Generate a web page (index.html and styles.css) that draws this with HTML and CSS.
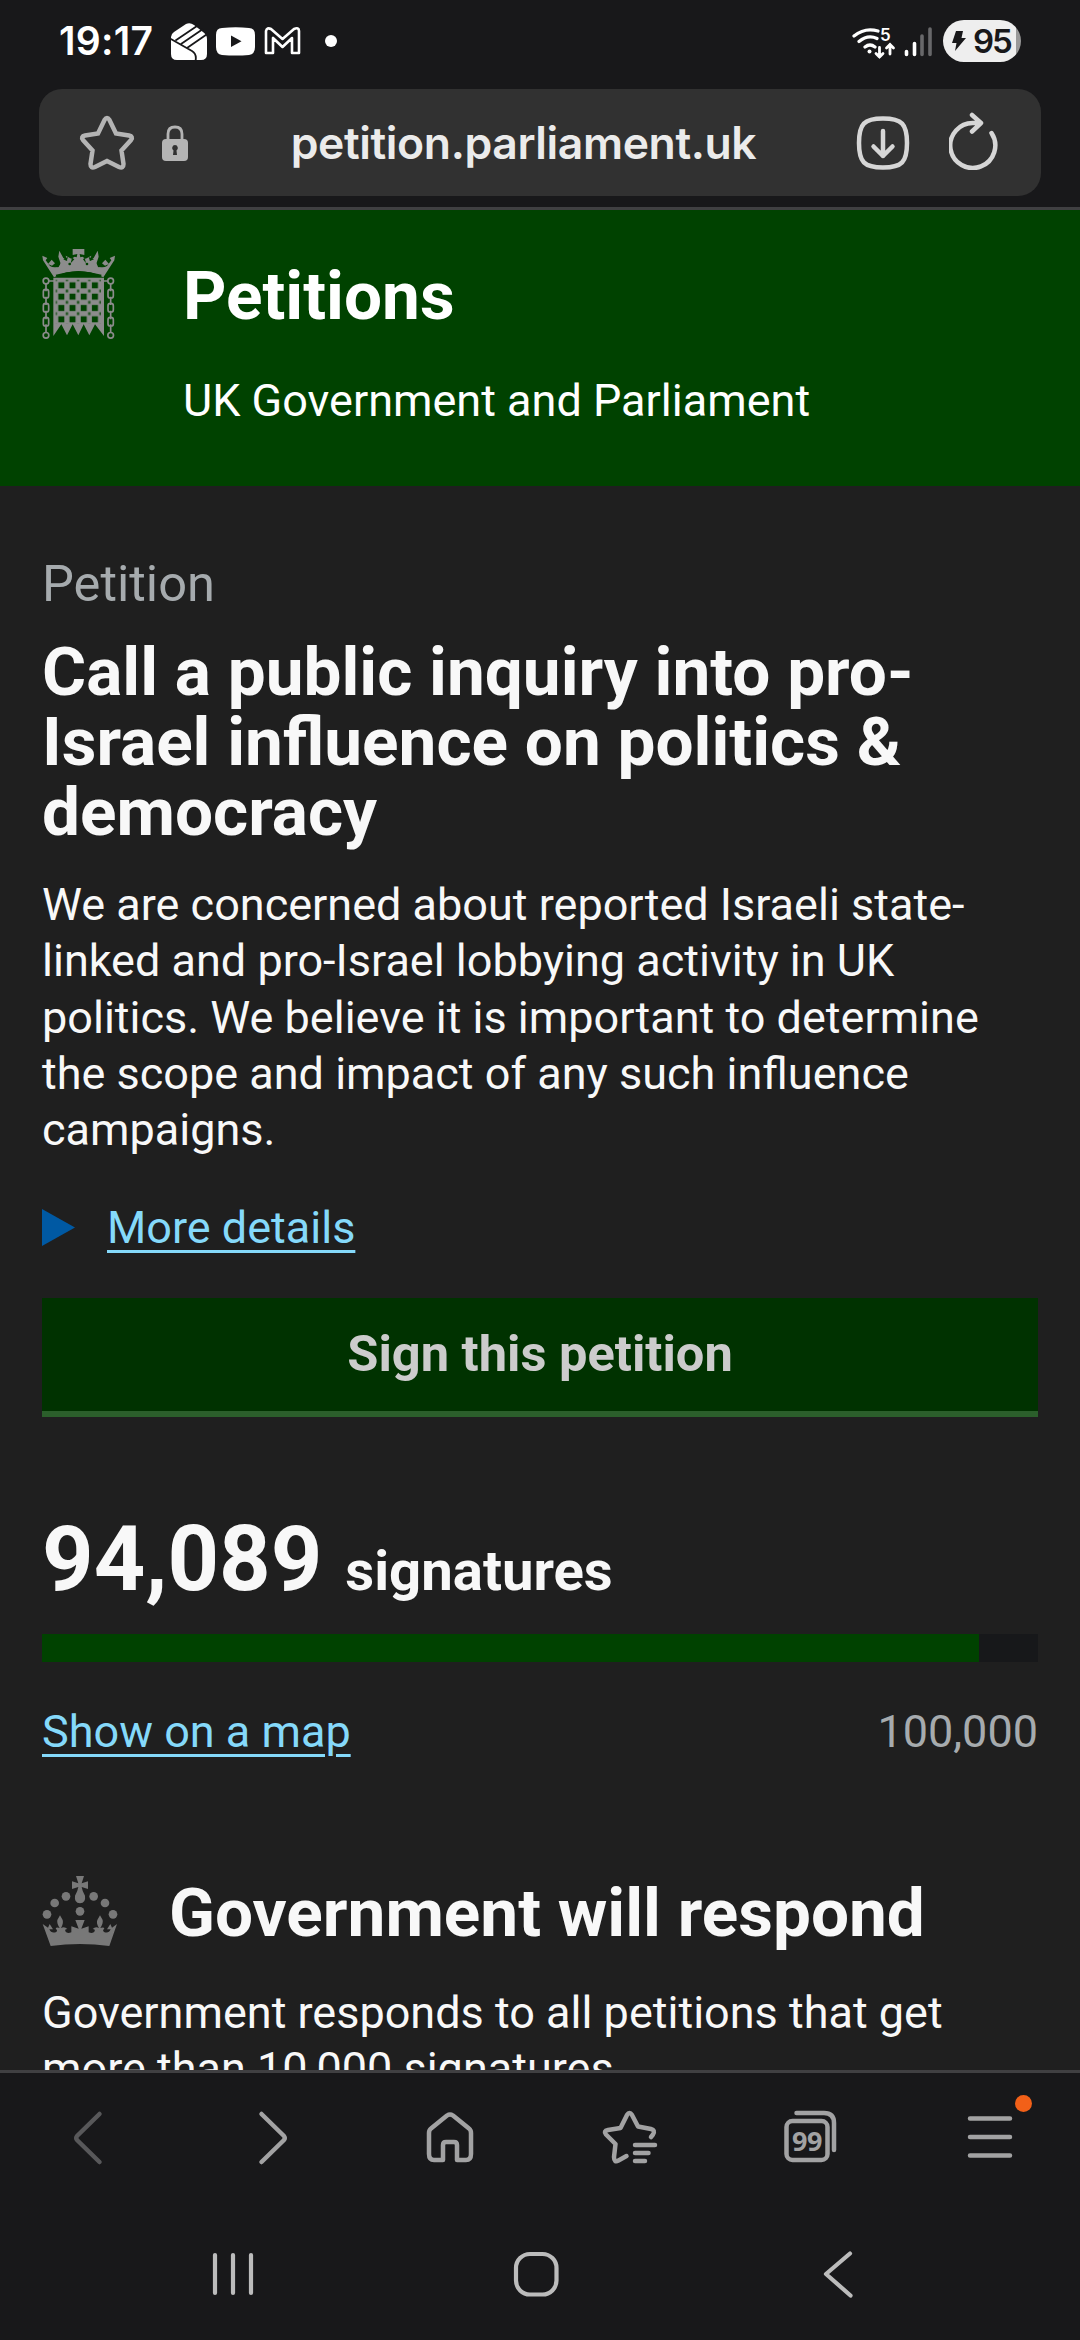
FILE: index.html
```html
<!DOCTYPE html>
<html lang="en">
<head>
    <meta charset="UTF-8">
    <meta name="viewport" content="width=device-width, initial-scale=1.0">
    <title>Petitions - UK Government and Parliament</title>
    <link rel="stylesheet" href="styles.css">
</head>
<body>
    <div class="status-bar">
        <span class="clock">19:17</span>
        <svg class="status-apps" width="170" height="42" viewBox="170 20 170 42">
            <!-- fist -->
            <path fill="#fff" d="M171 41V37Q171 34 174 32L186 24Q190 22 194 25L203 32Q207 35 207 39V54Q207 60 201 60H177Q171 60 171 54Z"/>
            <path fill="none" stroke="#18181a" stroke-width="1.8" d="M170 38.500 192 51Q197 54 195.500 61M175.500 40.500 197 26M181 44 203 29M187 48 208 33.500"/>
            <!-- youtube -->
            <path fill="#fff" d="M222 28Q236 26.500 249 28Q255 28 255 35V47Q255 54 249 55Q236 56 222 55Q216 54 216 47V35Q216 28 222 28Z"/>
            <path fill="#18181a" d="M231 35.500V47L241.500 41.200Z"/>
            <!-- gmail -->
            <path fill="none" stroke="#fff" stroke-width="2.600" stroke-linejoin="round" d="M266 53V31Q267 27 271 29L282.500 39 294 29Q299 27 299 31V53H292V38L282.500 47 273 38V53Z"/>
            <circle fill="#fff" cx="331" cy="41" r="6"/>
        </svg>
        <svg class="status-signal" width="82" height="42" viewBox="852 20 82 42">
            <g fill="none" stroke="#fff" stroke-width="3.200" stroke-linecap="round">
                <path d="M854 36Q865 27 878 31M859 41.500Q868 34 877 38.500M865 47Q870 43 875 47"/>
                <path stroke-width="2.800" d="M879.500 47.500V57M876 53.500 879.500 57 883 53.500M890 54V44.500M886.500 48 890 44.500 893.500 48"/>
            </g>
            <circle fill="#fff" cx="869.500" cy="51.500" r="2"/>
            <text class="wifi-gen" x="880" y="41">5</text>
            <g stroke-width="3.600" stroke-linecap="round">
                <path stroke="#fff" d="M906.500 51.500V54.500M914.500 43.500V54.500"/>
                <path stroke="#68686a" d="M922 36V54.500M930 29V54.500"/>
            </g>
        </svg>
        <div class="battery">
            <svg width="16" height="22" viewBox="0 0 16 22"><path fill="#18181a" d="M5 1H12L10.500 8H15L4 21 5.500 13H1Z"/></svg>
            <span>95</span>
        </div>
    </div>

    <div class="address-bar">
        <svg class="star" width="56" height="56" viewBox="0 0 56 56">
            <path d="M25.500 5Q28 1 30.500 5L37 18.500 50 20.500Q54.500 21.500 52 25L42.500 35.500 44.500 49Q44.500 54 40 52L28 46 16 52Q11.500 54 11.500 49L13.500 35.500 4 25Q1.500 21.500 6 20.500L19 18.500Z"/>
        </svg>
        <svg class="lock" width="26" height="36" viewBox="0 0 26 36">
            <path fill="none" stroke="#b4b4b4" stroke-width="2.800" d="M6 16V9Q6 2 13 2T20 9V16"/>
            <rect fill="#b4b4b4" y="14" width="26" height="22" rx="4"/>
            <path fill="#313131" d="M13 20A3 3 0 0 1 14.500 25.500L15 30H11L11.500 25.500A3 3 0 0 1 13 20Z"/>
        </svg>
        <span class="url">petition.parliament.uk</span>
        <svg class="download" width="54" height="54" viewBox="0 0 54 54">
            <path d="M27 2.500C46 2.500 51 8 51 27S46 51.500 27 51.500 3 46 3 27 8 2.500 27 2.500ZM27 15V40M17.500 30.500 27 40 36.500 30.500"/>
        </svg>
        <svg class="reload" width="50" height="58" viewBox="0 0 50 58">
            <path d="M42.500 21A22.500 22.500 0 1 1 25 11H32M23 3 32 11 23 19.500"/>
        </svg>
    </div>

    <div class="page">
        <header class="site-header">
            <svg class="portcullis" width="73" height="90" viewBox="36 27 219 270">
                <defs>
                    <pattern id="grille" x="77" y="119" width="33.600" height="34" patternUnits="userSpaceOnUse">
                        <rect x="8" y="8" width="18" height="18" fill="#004200"/>
                        <path fill="#245724" d="M0 0H4V4H0ZM30 0H34V4H30ZM0 30H4V34H0ZM30 30H34V34H30Z"/>
                    </pattern>
                </defs>
                <path d="M37 47 52 54 47 61 60 78Q70 84 84 80Q92 76 91 68L85 50 88 32 100 54 112 62 107 47 124 56 134 50 140 52 142 42 128 45V27H163V45L149 42 151 52 157 50 167 56 184 47 179 62 191 54 203 32 206 50 200 68Q199 76 207 80Q221 84 231 78L244 61 239 54 255 47 253 61 220 112Q145 74 72 112L39 61Z"/>
                <path d="M54 72 65 59 75 70 66 77ZM237 72 226 59 216 70 225 77Z"/>
                <path fill="none" stroke="#004200" stroke-width="5" d="M78 107Q145 86 214 107"/>
                <g fill="#004200"><circle cx="83" cy="78" r="4"/><circle cx="119" cy="72" r="4"/><circle cx="171" cy="72" r="4"/><circle cx="207" cy="78" r="4"/><path d="M100 58 114 51 110 63ZM192 58 176 51 180 63ZM133 58 122 70 126 53ZM159 58 168 70 164 53Z"/></g>
                <path d="M70 113H222V288L195 253 178 286 161 253 145 286 128 253 111 286 94 253 70 288Z"/>
                <path fill="url(#grille)" d="M77 119H213V250H77Z"/>
                <g fill="none" stroke="#8c8c8c" stroke-width="5">
                    <circle cx="48" cy="123" r="8.500"/><rect x="40" y="148" width="16" height="26" rx="7"/><rect x="40" y="190" width="16" height="26" rx="7"/><rect x="40" y="232" width="16" height="26" rx="7"/><circle cx="48" cy="286" r="8.500"/>
                    <circle cx="242" cy="123" r="8.500"/><rect x="234" y="148" width="16" height="26" rx="7"/><rect x="234" y="190" width="16" height="26" rx="7"/><rect x="234" y="232" width="16" height="26" rx="7"/><circle cx="242" cy="286" r="8.500"/>
                    <path d="M48 132V154M48 170V195M48 212V238M48 253V277M242 132V154M242 170V195M242 212V238M242 253V277M57 123H72M220 123H234"/>
                </g>
            </svg>
            <div class="brand">
                <a class="brand-name">Petitions</a>
                <p>UK Government and Parliament</p>
            </div>
        </header>

        <main>
            <h1><span class="context">Petition</span>Call a public inquiry into pro-Israel influence on politics &amp; democracy</h1>
            <p>We are concerned about reported Israeli state-linked and pro-Israel lobbying activity in UK politics. We believe it is important to determine the scope and impact of any such influence campaigns.</p>

            <div class="details">
                <i class="marker"></i>
                <a class="link">More details</a>
            </div>

            <a class="button">Sign this petition</a>

            <div class="signature-count"><span class="count">94,089</span> <span class="label">signatures</span></div>
            <div class="graph"><div class="graph-bar" style="width: 94.089%"></div></div>
            <div class="graph-footer">
                <a class="link">Show on a map</a>
                <span class="target">100,000</span>
            </div>

            <div class="response-heading">
                <svg class="crown" width="76" height="70" viewBox="36 48 228 210">
                    <circle cx="51" cy="163" r="13"/><circle cx="74" cy="129" r="13"/><circle cx="108" cy="109" r="13"/>
                    <circle cx="191" cy="109" r="13"/><circle cx="225" cy="129" r="13"/><circle cx="249" cy="163" r="13"/>
                    <circle cx="150" cy="154" r="13"/>
                    <path d="M138 48H162L155 70 174 64V87L155 81Q157 94 165 107Q168 129 150 130Q132 129 135 107Q143 94 145 81L126 87V64L145 70Z"/>
                    <path d="M38 192 54 203 59 192 69 208 58 208Q64 222 79 216Q84 210 77 207Q78 200 89 204Q80 190 82 180L90 166 98 180Q101 190 93 204Q104 199 112 207Q104 207 106 214Q111 222 124 217V199L146 206 136 180H164L154 206 176 199V217Q189 222 194 214Q196 207 188 207Q196 199 207 204Q198 190 202 180L210 166 218 180Q220 190 211 204Q223 200 223 207Q216 210 222 216Q236 222 242 208L231 208 241 192 246 203 261 192 238 258Q150 246 62 258Z"/>
                </svg>
                <h2>Government will respond</h2>
            </div>
            <p class="response-text">Government responds to all petitions that get more than 10,000 signatures</p>
        </main>
    </div>

    <nav class="toolbar">
        <svg class="dim" width="60" height="60" viewBox="0 0 60 60"><path d="M39.500 6 17 28Q15.500 30 17 32L39.500 54"/></svg>
        <svg width="60" height="60" viewBox="0 0 60 60"><path d="M21.500 6 44 28Q45.500 30 44 32L21.500 54"/></svg>
        <svg width="60" height="60" viewBox="0 0 60 60"><path d="M27 7.500Q30 5.500 33 7.500L49 20.500Q51 22 51 25V46Q51 52 46 52H37V37Q37 34 34 34H26Q23 34 23 37V52H14Q9 52 9 46V25Q9 22 11 20.500Z"/></svg>
        <svg width="60" height="60" viewBox="0 0 60 60"><path d="M51 29 53 26.500Q55.500 22 51 21L38 18.500 32 7Q29.500 3 27 7L20.500 20 8 22Q3 23 6 26.500L15.500 36 14 49Q14 55 18.500 52.500L26.500 48M35 37H55M35 45H48.500M35 53H45"/></svg>
        <svg width="60" height="60" viewBox="0 0 60 60"><rect x="6.500" y="13" width="41" height="39" rx="6"/><path d="M16.500 5H44Q54 5 54 15V42"/><text class="tab-count" x="27" y="43">99</text></svg>
        <div class="menu">
            <svg width="60" height="60" viewBox="0 0 60 60"><path d="M10 10.500H50M10 29H50M10 47.500H50"/></svg>
            <i class="dot"></i>
        </div>
    </nav>

    <div class="system-nav">
        <svg width="50" height="50" viewBox="0 0 50 50"><path d="M7 6V44M25 6V44M43 6V44"/></svg>
        <svg width="50" height="50" viewBox="0 0 50 50"><rect x="5" y="5" width="40.500" height="40.500" rx="14"/></svg>
        <svg width="50" height="50" viewBox="0 0 50 50"><path d="M37 4.500 13 25 37.500 46.500"/></svg>
    </div>
</body>
</html>
```
FILE: styles.css
```css
* {
    box-sizing: border-box;
}

body {
    font-family: Roboto, "Liberation Sans", sans-serif;
    font-size: 45px;
    line-height: 56.25px;
    background: #18181a;
    color: #f8f8f8;
    margin: 0;
    width: 1080px;
    height: 2340px;
    display: flex;
    flex-direction: column;
    overflow: hidden;
}

h1, h2, p {
    margin: 0;
}

svg {
    flex: none;
}

/* phone status bar */
.status-bar {
    display: flex;
    align-items: center;
    height: 42px;
    margin: 20px 59px 27px 59px;
    font-family: Inter, sans-serif;
    color: #fff;
}

.clock {
    width: 111px;
    font-size: 39px;
    font-weight: 600;
    letter-spacing: 0.3px;
}

.status-signal {
    margin-left: auto;
}

.wifi-gen {
    font: 600 17px Inter, sans-serif;
    fill: #fff;
}

.battery {
    display: flex;
    align-items: center;
    gap: 6px;
    width: 78px;
    height: 42px;
    margin-left: 9px;
    padding-left: 8px;
    border-radius: 21px;
    background: linear-gradient(to right, #eee 73px, #999 73px);
    color: #18181a;
    font-size: 33px;
    font-weight: 600;
    letter-spacing: -2px;
}

/* browser address bar */
.address-bar {
    display: flex;
    align-items: center;
    height: 107px;
    margin: 0 39px 11px;
    padding: 0 42px 0 40px;
    border-radius: 23px;
    background: #313131;
}

.star {
    fill: none;
    stroke: #b4b4b4;
    stroke-width: 4.500;
}

.lock {
    margin-left: 27px;
}

.url {
    flex: 1;
    text-align: center;
    padding: 2px 0 0 3px;
    font-family: Inter, sans-serif;
    font-size: 44.500px;
    font-weight: 600;
    letter-spacing: -0.4px;
    color: #ebebeb;
}

.download,
.reload {
    fill: none;
    stroke: #d6d6d6;
    stroke-width: 4.500;
    stroke-linecap: round;
    stroke-linejoin: round;
}

.reload {
    margin: 0 0 4px 39px;
}

/* web page */
.page {
    height: 1866px;
    border-top: 3px solid #404042;
    border-bottom: 3px solid #404042;
    background: #1f1f1f;
    overflow: hidden;
}

.site-header {
    display: flex;
    height: 276px;
    padding: 39px 42px 0;
    background: #004200;
    color: #fff;
}

.portcullis {
    fill: #8c8c8c;
}

.brand {
    padding: 12px 0 0 68px;
}

.brand-name {
    display: block;
    margin-bottom: 42px;
    font-size: 67.5px;
    font-weight: 700;
    line-height: 70px;
}

main {
    padding: 63px 42px 0;
}

h1 {
    margin-bottom: 30px;
    font-size: 67.5px;
    line-height: 70px;
}

.context {
    display: block;
    margin-bottom: 18px;
    font-size: 50.6px;
    font-weight: 400;
    color: #a6abae;
}

.details {
    display: flex;
    align-items: center;
    margin: 42px 0 41px;
}

.marker {
    width: 33px;
    height: 37px;
    margin: 0 32px 2px 0;
    background: #0059a3;
    clip-path: polygon(0 0, 100% 50%, 0 100%);
}

.link {
    color: #85d9fa;
    text-decoration: underline;
    text-decoration-thickness: 3px;
    text-underline-offset: 7px;
}

.button {
    display: flex;
    align-items: center;
    justify-content: center;
    height: 119px;
    padding-top: 1px;
    border-bottom: 6px solid #2b5f2b;
    background: #003200;
    color: #ccc;
    font-size: 50.6px;
    font-weight: 700;
}

.signature-count {
    display: flex;
    align-items: baseline;
    gap: 23px;
    margin: 98px 0 29px;
    font-weight: 700;
}

.count {
    font-size: 90px;
    line-height: 90px;
}

.label {
    font-size: 56.25px;
}

.graph {
    height: 28px;
    background: #17181a;
}

.graph-bar {
    height: 100%;
    background: #004200;
}

.graph-footer {
    display: flex;
    justify-content: space-between;
    margin: 42px 0 116px;
}

.target {
    color: #a6abae;
}

.response-heading {
    display: flex;
    gap: 51px;
    margin-bottom: 37px;
}

.crown {
    fill: #787878;
}

h2 {
    margin-top: 2px;
    font-size: 67.5px;
    line-height: 70px;
}

/* browser toolbar */
.toolbar {
    display: grid;
    grid-template-columns: repeat(6, 180px);
    place-items: center;
    height: 130px;
}

.toolbar svg {
    display: block;
    fill: none;
    stroke: #a2a2a3;
    stroke-width: 4.500;
    stroke-linecap: round;
    stroke-linejoin: round;
}

.toolbar .dim {
    stroke: #58585a;
}

.toolbar .tab-count {
    font: 700 27px "Noto Sans", sans-serif;
    letter-spacing: -0.5px;
    text-anchor: middle;
    fill: #a2a2a3;
    stroke: none;
}

.menu {
    position: relative;
}

.dot {
    position: absolute;
    top: -13px;
    right: -12px;
    width: 17px;
    height: 17px;
    border-radius: 50%;
    background: #f26018;
}

/* android navigation */
.system-nav {
    display: flex;
    justify-content: space-between;
    padding: 46px 217px 0 208px;
}

.system-nav svg {
    fill: none;
    stroke: #bcbcbc;
    stroke-width: 4.200;
    stroke-linecap: round;
    stroke-linejoin: round;
}
```
